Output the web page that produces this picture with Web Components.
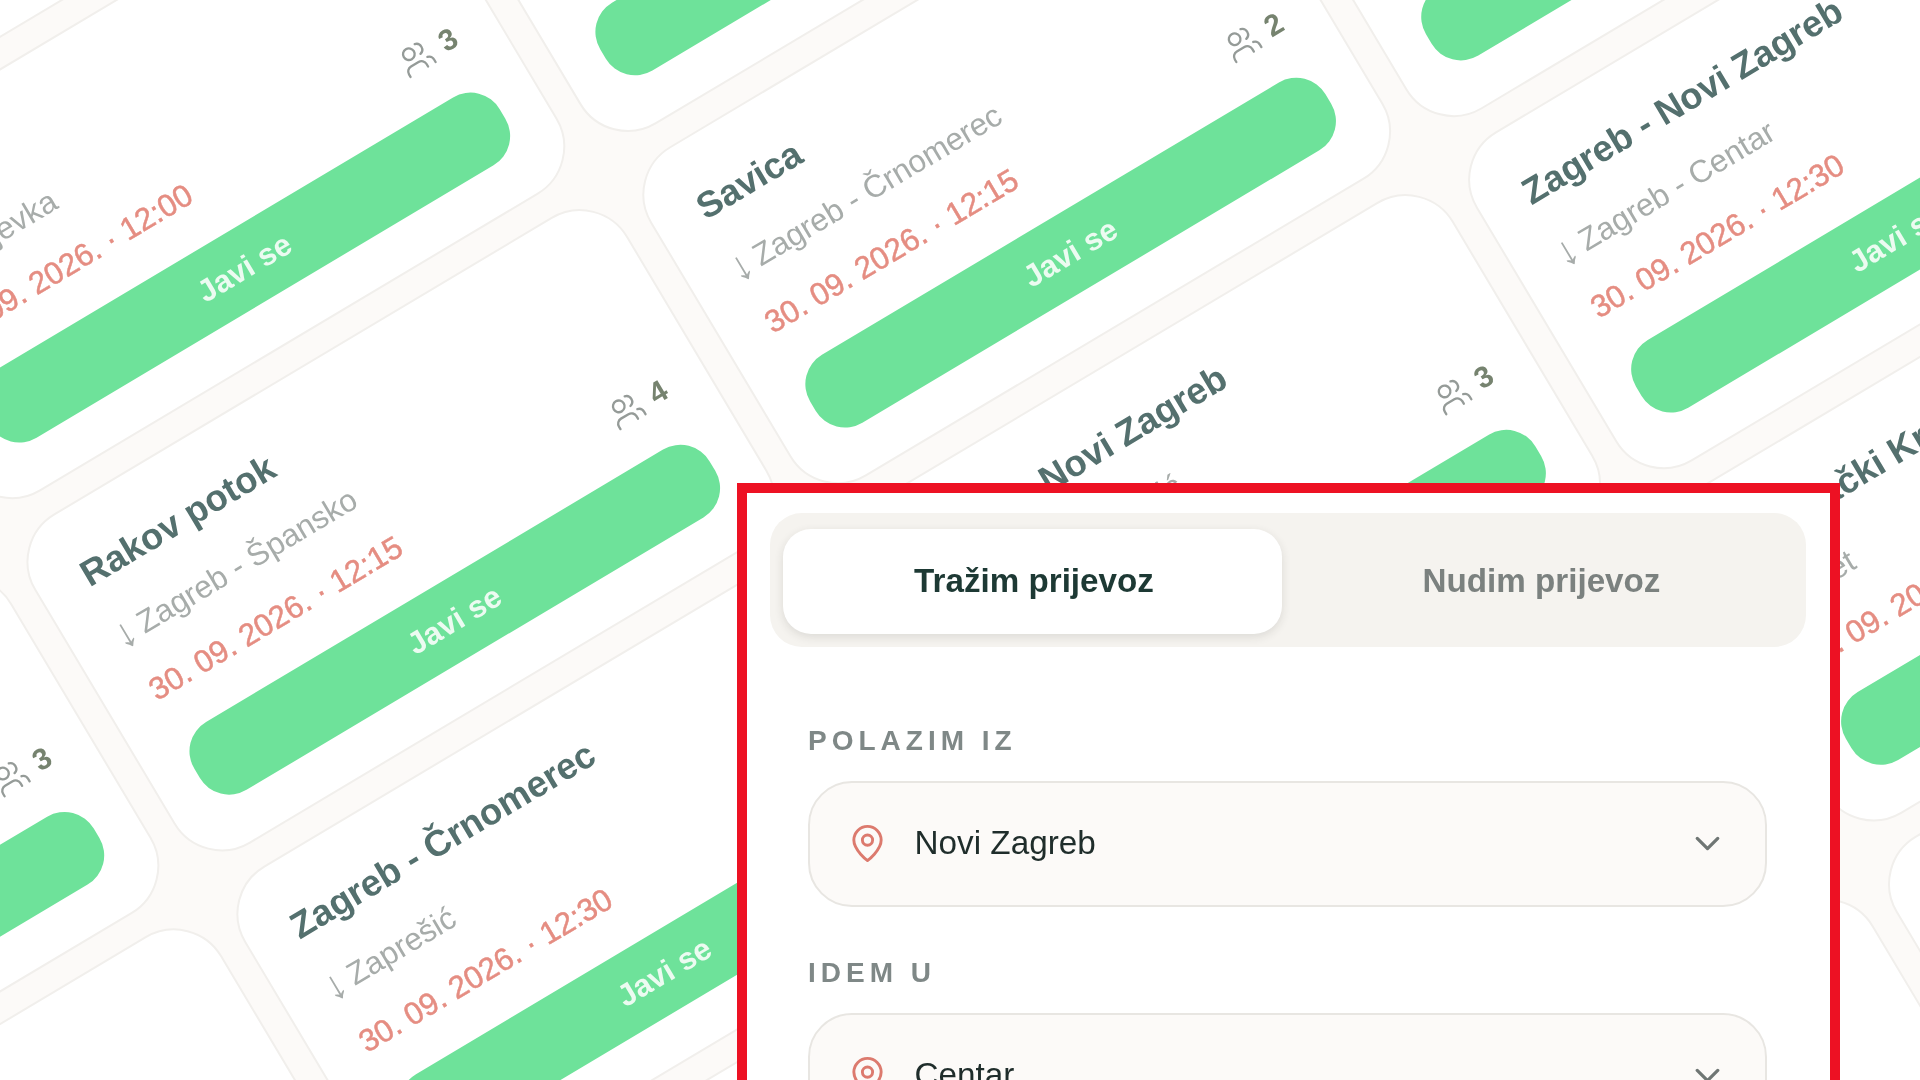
<!DOCTYPE html>
<html lang="hr">
<head>
<meta charset="utf-8">
<title>Prijevoz</title>
<style>
html,body{margin:0;padding:0;height:1080px;width:1920px;overflow:hidden;background:#fcfaf8;font-family:"Liberation Sans",Arial,sans-serif}
</style>
</head>
<body>
<app-stage>
  <ride-grid slot="background">
    <!-- i=-1 -->
    <ride-card></ride-card>
    <ride-card></ride-card>
    <ride-card count="3"></ride-card>
    <ride-card></ride-card>
    <ride-card></ride-card>
    <ride-card></ride-card>
    <!-- i=0 -->
    <ride-card></ride-card>
    <ride-card route="Sigetjevka" date="30. 09. 2026. · 12:00" count="3"></ride-card>
    <ride-card title="Rakov potok" route="Zagreb - Špansko" date="30. 09. 2026. · 12:15" count="4"></ride-card>
    <ride-card title="Zagreb - Črnomerec" route="Zaprešić" date="30. 09. 2026. · 12:30"></ride-card>
    <ride-card></ride-card>
    <ride-card></ride-card>
    <!-- i=1 -->
    <ride-card></ride-card>
    <ride-card></ride-card>
    <ride-card title="Savica" route="Zagreb - Črnomerec" date="30. 09. 2026. · 12:15" count="2"></ride-card>
    <ride-card title="Zagreb - Novi Zagreb" route="Zagreb - Zaprešić" date="30. 09. 2026. · 12:30" count="3"></ride-card>
    <ride-card></ride-card>
    <ride-card></ride-card>
    <!-- i=2 -->
    <ride-card></ride-card>
    <ride-card></ride-card>
    <ride-card></ride-card>
    <ride-card title="Zagreb - Novi Zagreb" route="Zagreb - Centar" date="30. 09. 2026. · 12:30"></ride-card>
    <ride-card title="Trnovački Krug" route="Siget" date="30. 09. 2026. · 12:30"></ride-card>
    <ride-card></ride-card>
  </ride-grid>
  <search-panel slot="panel">
    <tab-switch>
      <tab-button active>Tražim prijevoz</tab-button>
      <tab-button>Nudim prijevoz</tab-button>
    </tab-switch>
    <place-field label="POLAZIM IZ" value="Novi Zagreb"></place-field>
    <place-field label="IDEM U" value="Centar"></place-field>
  </search-panel>
</app-stage>

<script>
const PIN='<svg viewBox="0 0 24 24" width="41" height="41" fill="none" stroke="#dc7a6e" stroke-width="1.7" stroke-linecap="round" stroke-linejoin="round"><path d="M20 10c0 6-8 12-8 12s-8-6-8-12a8 8 0 0 1 16 0Z"/><circle cx="12" cy="10" r="3"/></svg>';
const CHEV='<svg viewBox="0 0 24 24" width="41" height="41" fill="none" stroke="#6f7674" stroke-width="1.9" stroke-linecap="round" stroke-linejoin="round"><path d="m6 9 6 6 6-6"/></svg>';
const USERS='<svg viewBox="0 0 24 24" width="35" height="35" fill="none" stroke="#959b98" stroke-width="1.6" stroke-linecap="round" stroke-linejoin="round"><path d="M16 21v-2a4 4 0 0 0-4-4H6a4 4 0 0 0-4 4v2"/><circle cx="9" cy="7" r="4"/><path d="M22 21v-2a4 4 0 0 0-3-3.87"/><path d="M16 3.13a4 4 0 0 1 0 7.75"/></svg>';

function shadow(el,html){const r=el.attachShadow({mode:'open'});r.innerHTML=html;return r;}
function esc(s){return String(s).replace(/&/g,'&amp;').replace(/</g,'&lt;');}

customElements.define('app-stage',class extends HTMLElement{
  constructor(){super();shadow(this,`<style>
    :host{display:block;position:relative;width:1920px;height:1080px;overflow:hidden;background:#fcfaf8;filter:blur(.5px)}
  </style><slot name="background"></slot><slot name="panel"></slot>`);}
});

customElements.define('ride-grid',class extends HTMLElement{
  constructor(){super();shadow(this,`<style>
    :host{position:absolute;left:-1029.9px;top:204.8px;display:grid;
      grid-auto-flow:column;grid-template-rows:repeat(6,384px);grid-auto-columns:691px;gap:26px;
      transform-origin:0 0;transform:rotate(-30.8deg)}
  </style><slot></slot>`);}
});

customElements.define('ride-card',class extends HTMLElement{
  constructor(){super();
    const t=this.getAttribute('title')||'',r=this.getAttribute('route')||'',d=this.getAttribute('date')||'',c=this.getAttribute('count');
    this.removeAttribute('title');
    shadow(this,`<style>
    :host{display:flex;flex-direction:column;box-sizing:border-box;width:691px;height:384px;background:#fff;
      border:2px solid #f1efec;border-radius:56px;padding:45px 43.5px 0}
    .title{font:700 36.6px/46px "Liberation Sans",Arial,sans-serif;color:#54706e;height:46px;white-space:nowrap;margin-left:3.5px}
    .route{font:400 31.5px/40px "Liberation Sans",Arial,sans-serif;color:#a7acaa;height:40px;margin-top:25.5px;white-space:nowrap;display:flex;align-items:center}
    .arrow{font-size:42px;line-height:40px;width:27px;flex:none}
    .row{display:flex;justify-content:space-between;align-items:flex-start;height:36px;margin-top:25px}
    .date{font:400 31.3px/40px "Liberation Sans",Arial,sans-serif;color:#e58d82;white-space:nowrap;-webkit-text-stroke:.5px #e58d82;margin-left:3px}
    .count{display:flex;align-items:center;gap:11px;margin-top:3px;font:700 30px/35px "Liberation Sans",Arial,sans-serif;color:#76836f}
    svg{display:block;flex:none}
    .btn{margin-top:37.5px;height:79px;flex:none;border-radius:34px;background:#6ee29a;color:#ecfbf1;display:flex;align-items:center;justify-content:center;
      font:700 31px/40px "Liberation Sans",Arial,sans-serif}
    </style>
    <div class="title">${esc(t)}</div>
    <div class="route">${r?'<span class="arrow">↓</span><span>'+esc(r)+'</span>':''}</div>
    <div class="row"><div class="date">${esc(d)}</div>${c?`<div class="count">${USERS}<span>${esc(c)}</span></div>`:''}</div>
    <div class="btn">Javi se</div>`);
  }
});

customElements.define('search-panel',class extends HTMLElement{
  constructor(){super();shadow(this,`<style>
    :host{position:absolute;left:737px;top:482.5px;width:1103px;height:700px;box-sizing:border-box;
      border:10px solid #ed1123;background:#fff;padding:20.5px 24px 0 23px;display:block}
    ::slotted(place-field){margin-left:38px;margin-right:39px}
  </style><slot></slot>`);}
});

customElements.define('tab-switch',class extends HTMLElement{
  constructor(){super();shadow(this,`<style>
    :host{display:flex;box-sizing:border-box;height:134px;padding:16px 13px 13px;gap:5px;background:#f5f3ef;border-radius:32px;margin-bottom:77px}
  </style><slot></slot>`);}
});

customElements.define('tab-button',class extends HTMLElement{
  constructor(){super();shadow(this,`<style>
    :host{flex:1;display:flex;align-items:center;justify-content:center;border-radius:28px;padding:0 0 2px 3px;box-sizing:border-box;
      font:700 33.2px/40px "Liberation Sans",Arial,sans-serif;color:#7b817f}
    :host([active]){flex:0 0 499px;background:#fff;color:#1d3934;box-shadow:0 3px 10px rgba(40,40,30,.12)}
  </style><slot></slot>`);}
});

customElements.define('place-field',class extends HTMLElement{
  constructor(){super();
    shadow(this,`<style>
    :host{display:block;margin-bottom:49px}
    .label{font:700 28px/34px "Liberation Sans",Arial,sans-serif;letter-spacing:5px;color:#7f8887;margin-bottom:23px;white-space:nowrap}
    .box{box-sizing:border-box;height:126px;display:flex;align-items:center;background:#fcfaf8;border:2px solid #e8e6e2;border-radius:44px;padding:0 37.5px 0 36.5px}
    .val{flex:1;margin-left:27px;padding-bottom:2px;font:400 33.3px/40px "Liberation Sans",Arial,sans-serif;color:#1f2d2b}
    svg{display:block;flex:none;margin-bottom:2px}
    </style>
    <div class="label">${esc(this.getAttribute('label'))}</div>
    <div class="box">${PIN}<span class="val">${esc(this.getAttribute('value'))}</span>${CHEV}</div>`);
  }
});
</script>
</body>
</html>
